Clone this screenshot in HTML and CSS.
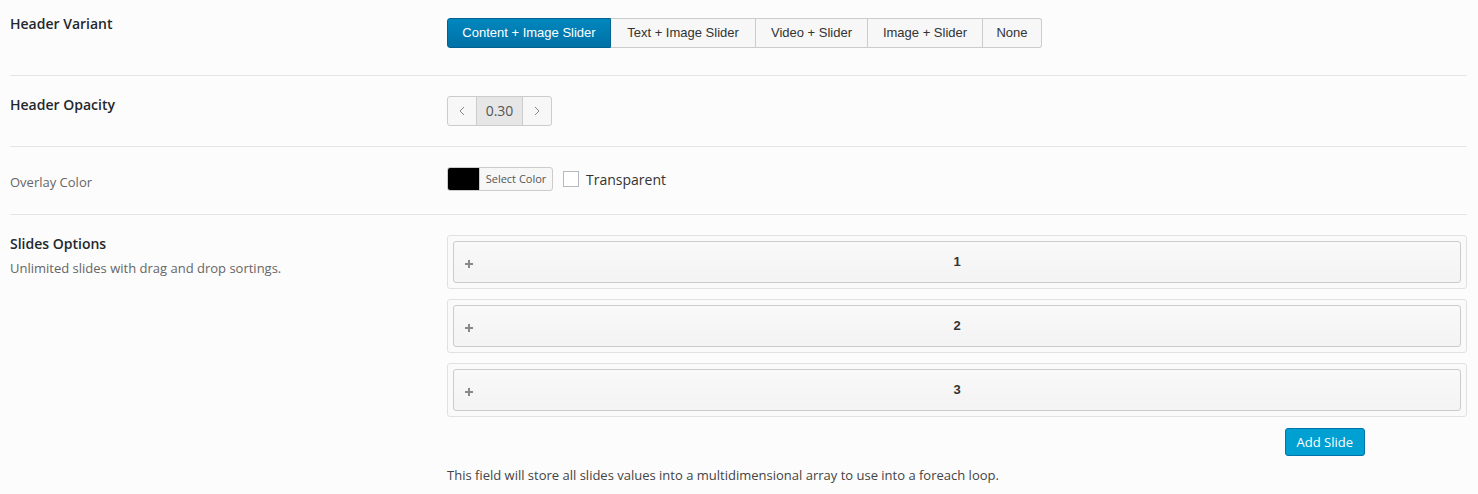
FILE: index.html
```html
<!DOCTYPE html>
<html>
<head>
<meta charset="utf-8">
<link rel="stylesheet" href="styles.css">
</head>
<body>
<div class="panel">
  <div class="row row-variant">
    <div class="label"><span class="title">Header Variant</span></div>
    <div class="field">
      <div class="btn-group">
        <span class="seg active">Content + Image Slider</span>
        <span class="seg">Text + Image Slider</span>
        <span class="seg">Video + Slider</span>
        <span class="seg">Image + Slider</span>
        <span class="seg">None</span>
      </div>
    </div>
  </div>
  <div class="row row-opacity">
    <div class="label"><span class="title">Header Opacity</span></div>
    <div class="field">
      <div class="spinner">
        <span class="spin-btn"><svg width="6" height="10" viewBox="0 0 6 10"><path d="M5 1 L1 5 L5 9" fill="none" stroke="#888" stroke-width="1"/></svg></span>
        <span class="spin-val">0.30</span>
        <span class="spin-btn"><svg width="6" height="10" viewBox="0 0 6 10"><path d="M1 1 L5 5 L1 9" fill="none" stroke="#888" stroke-width="1"/></svg></span>
      </div>
    </div>
  </div>
  <div class="row row-color">
    <div class="label"><span class="plain">Overlay Color</span></div>
    <div class="field">
      <div class="picker">
        <span class="swatch"></span>
        <span class="picker-text">Select Color</span>
      </div>
      <label class="check"><span class="box"></span><span>Transparent</span></label>
    </div>
  </div>
  <div class="row row-slides">
    <div class="label">
      <div class="title">Slides Options</div>
      <div class="desc">Unlimited slides with drag and drop sortings.</div>
    </div>
    <div class="field field-col">
      <div class="slide"><div class="slide-head"><svg class="plus" width="8" height="8" viewBox="0 0 8 8"><path d="M4 0 V8 M0 4 H8" stroke="#888" stroke-width="2"/></svg><span class="num">1</span></div></div>
      <div class="slide"><div class="slide-head"><svg class="plus" width="8" height="8" viewBox="0 0 8 8"><path d="M4 0 V8 M0 4 H8" stroke="#888" stroke-width="2"/></svg><span class="num">2</span></div></div>
      <div class="slide"><div class="slide-head"><svg class="plus" width="8" height="8" viewBox="0 0 8 8"><path d="M4 0 V8 M0 4 H8" stroke="#888" stroke-width="2"/></svg><span class="num">3</span></div></div>
      <div class="add-wrap"><span class="add-btn">Add Slide</span></div>
      <p class="note">This field will store all slides values into a multidimensional array to use into a foreach loop.</p>
    </div>
  </div>
</div>
</body>
</html>
```

FILE: styles.css
```css
html, body {
  margin: 0;
  padding: 0;
  background: #fcfcfc;
}
body {
  font-family: "Open Sans", "Liberation Sans", sans-serif;
  color: #444;
  overflow: hidden;
  height: 494px;
}
.panel {
  margin: -2px 11px 0 10px;
}
.row {
  display: flex;
  border-bottom: 1px solid #e5e5e5;
}
.row-slides { border-bottom: none; }
.label {
  width: 437px;
  flex: none;
  padding-top: 19px;
}
.row-variant .label { padding-top: 16px; }
.row-color .label { padding-top: 25px; }
.title {
  font-size: 14px;
  line-height: 20px;
  font-weight: 600;
  color: #23282d;
  display: block;
}
.plain {
  font-size: 13px;
  line-height: 20px;
  color: #666;
  display: block;
}
.desc {
  font-size: 13px;
  line-height: 20px;
  color: #666;
  margin-top: 4px;
}
.field {
  flex: 1;
  display: flex;
  align-items: flex-start;
}
.row-variant .field { padding: 20px 0 27px; }
.row-opacity .field { padding: 20px 0 20px; }
.row-color .field { padding: 20px 0 23px; align-items: center; }
.row-slides .field { padding: 20px 0 0; }

/* button group */
.btn-group {
  display: flex;
  font-family: "Liberation Sans", Arial, sans-serif;
  font-size: 13px;
}
.seg {
  line-height: 28px;
  border: 1px solid #ccc;
  border-left: none;
  background: #f7f7f7;
  color: #333;
  text-align: center;
  box-sizing: border-box;
  height: 30px;
}
.seg:nth-child(1) { width: 164px; border-left: 1px solid #ccc; border-radius: 3px 0 0 3px; }
.seg:nth-child(2) { width: 145px; }
.seg:nth-child(3) { width: 112px; }
.seg:nth-child(4) { width: 115px; }
.seg:nth-child(5) { width: 59px; border-radius: 0 3px 3px 0; }
.seg.active {
  background: linear-gradient(#0087be, #0071a6);
  border-color: #006291;
  color: #fff;
}

/* spinner */
.spinner {
  display: flex;
  border: 1px solid #ccc;
  border-radius: 3px;
  height: 28px;
  overflow: hidden;
  background: #f7f7f7;
}
.spin-btn {
  width: 28px;
  display: flex;
  align-items: center;
  justify-content: center;
}
.spin-val {
  width: 45px;
  background: #e6e6e6;
  border-left: 1px solid #ccc;
  border-right: 1px solid #ccc;
  text-align: center;
  font-size: 14px;
  line-height: 28px;
  color: #555;
}

/* color picker */
.picker {
  display: flex;
  height: 22px;
  border: 1px solid #ccc;
  border-radius: 3px;
  overflow: hidden;
  background: #f7f7f7;
  width: 104px;
}
.swatch {
  width: 31px;
  background: #000;
}
.picker-text {
  flex: 1;
  border-left: 1px solid #ccc;
  font-size: 11px;
  line-height: 22px;
  color: #555;
  text-align: center;
}
.check {
  display: flex;
  align-items: center;
  margin-left: 10px;
  font-size: 14px;
  color: #333;
}
.box {
  width: 14px;
  height: 14px;
  border: 1px solid #b4b9be;
  background: #fff;
  margin-right: 7px;
}

/* slides */
.field-col {
  flex-direction: column;
  align-items: stretch;
}
.slide {
  border: 1px solid #e1e1e1;
  border-radius: 3px;
  padding: 5px;
  margin-bottom: 10px;
  background: #fafafa;
}
.slide-head {
  position: relative;
  border: 1px solid #ccc;
  border-radius: 3px;
  background: linear-gradient(#f9f9f9, #f3f3f3);
  display: flex;
  align-items: center;
  justify-content: center;
  padding-bottom: 2px;
  box-sizing: content-box;
  height: 38px;
}
.plus {
  position: absolute;
  left: 11px;
  top: 18px;
}
.num {
  font-family: "Liberation Sans", Arial, sans-serif;
  font-weight: bold;
  font-size: 13px;
  color: #333;
}
.add-wrap {
  display: flex;
  justify-content: flex-end;
  padding-right: 102px;
  margin-top: 1px;
}
.add-btn {
  height: 26px;
  line-height: 26px;
  padding: 0 11px;
  background: #00a0d2;
  border: 1px solid #0073aa;
  border-radius: 3px;
  color: #fff;
  font-size: 13px;
}
.note {
  margin: 9px 0 0;
  font-size: 13px;
  line-height: 20px;
  color: #444;
}
```
